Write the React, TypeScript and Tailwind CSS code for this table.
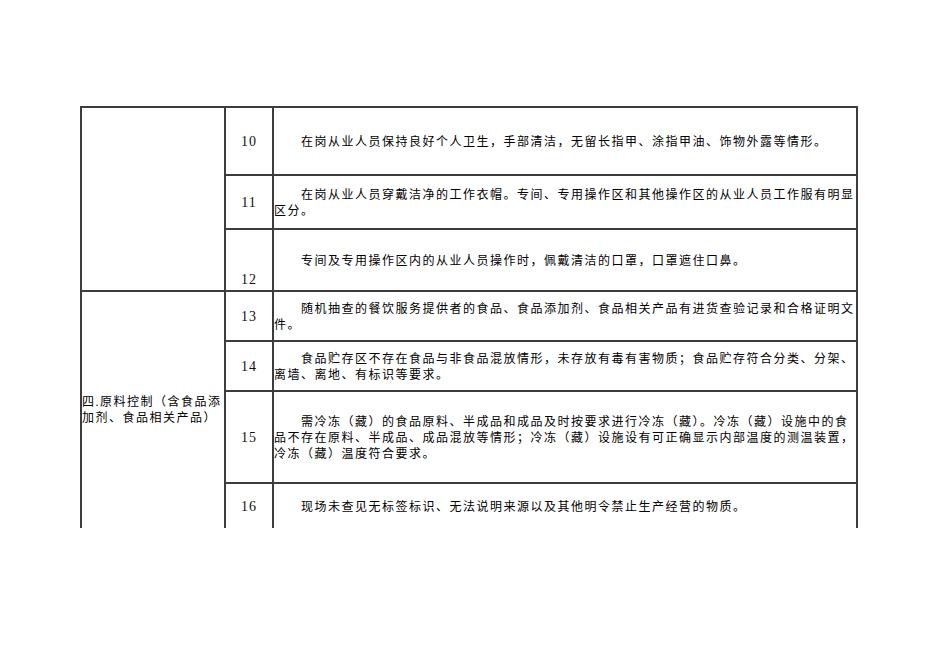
const font = { fontFamily: '"Liberation Serif", "Noto Sans CJK SC", serif' };

type Row = { no: string; text: string; h: string; last?: boolean; numBottom?: boolean };

const sectionOne: Row[] = [
  { no: "10", text: "在岗从业人员保持良好个人卫生，手部清洁，无留长指甲、涂指甲油、饰物外露等情形。", h: "h-[68px]" },
  { no: "11", text: "在岗从业人员穿戴洁净的工作衣帽。专间、专用操作区和其他操作区的从业人员工作服有明显区分。", h: "h-[54px]" },
  { no: "12", text: "专间及专用操作区内的从业人员操作时，佩戴清洁的口罩，口罩遮住口鼻。", h: "h-[60px]", last: true, numBottom: true },
];

const sectionTwo: Row[] = [
  { no: "13", text: "随机抽查的餐饮服务提供者的食品、食品添加剂、食品相关产品有进货查验记录和合格证明文件。", h: "h-[50px]" },
  { no: "14", text: "食品贮存区不存在食品与非食品混放情形，未存放有毒有害物质；食品贮存符合分类、分架、离墙、离地、有标识等要求。", h: "h-[50px]" },
  { no: "15", text: "需冷冻（藏）的食品原料、半成品和成品及时按要求进行冷冻（藏）。冷冻（藏）设施中的食品不存在原料、半成品、成品混放等情形；冷冻（藏）设施设有可正确显示内部温度的测温装置，冷冻（藏）温度符合要求。", h: "h-[92px]" },
  { no: "16", text: "现场未查见无标签标识、无法说明来源以及其他明令禁止生产经营的物质。", h: "h-[44px]", last: true },
];

function ItemRow({ row }: { row: Row }) {
  return (
    <div className={`flex ${row.h} ${row.last ? "" : "border-b-2 border-[#3c3c3c]"}`}>
      {/* 序号 */}
      <div
        className={`w-[48px] shrink-0 border-r-2 border-[#3c3c3c] flex justify-center text-[14px] font-normal tracking-[1px] text-[#111] ${
          row.numBottom ? "items-end" : "items-center"
        }`}
      >
        {row.no}
      </div>
      {/* 检查内容 */}
      <div className="flex-1 flex items-center">
        <p className="w-full text-[12px] leading-[16px] tracking-[1.5px] indent-[27px] text-black pt-[2px]">
          {row.text}
        </p>
      </div>
    </div>
  );
}

export default function App() {
  return (
    <div className="min-h-screen bg-white pt-[106px] pl-[80px] text-black" style={font}>
      <div className="w-[778px] border-l-2 border-t-2 border-r-2 border-[#3c3c3c]">
        {/* 第三部分（续） */}
        <div className="flex border-b-2 border-[#3c3c3c]">
          <div className="w-[144px] shrink-0 border-r-2 border-[#3c3c3c]" />
          <div className="flex-1 flex flex-col">
            {sectionOne.map((r) => (
              <ItemRow key={r.no} row={r} />
            ))}
          </div>
        </div>

        {/* 四、原料控制 */}
        <div className="flex">
          <div className="w-[144px] shrink-0 border-r-2 border-[#3c3c3c] flex items-center">
            <p className="text-[12px] leading-[16px] tracking-[1.5px] pr-[2px]">
              四.原料控制（含食品添加剂、食品相关产品）
            </p>
          </div>
          <div className="flex-1 flex flex-col">
            {sectionTwo.map((r) => (
              <ItemRow key={r.no} row={r} />
            ))}
          </div>
        </div>
      </div>
    </div>
  );
}
